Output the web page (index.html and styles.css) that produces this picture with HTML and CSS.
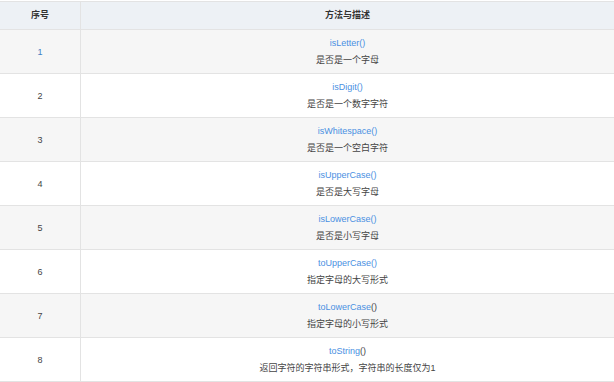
FILE: index.html
```html
<!DOCTYPE html>
<html lang="zh-CN">
<head>
<meta charset="utf-8">
<title>Character 方法</title>
<link rel="stylesheet" href="styles.css">
</head>
<body>
<div class="wrap">
<table class="ref">
  <thead>
    <tr><th class="num">序号</th><th>方法与描述</th></tr>
  </thead>
  <tbody>
    <tr><td class="num first">1</td><td><a>isLetter()</a><br>是否是一个字母</td></tr>
    <tr><td class="num">2</td><td><a>isDigit()</a><br>是否是一个数字字符</td></tr>
    <tr><td class="num">3</td><td><a>isWhitespace()</a><br>是否是一个空白字符</td></tr>
    <tr><td class="num">4</td><td><a>isUpperCase()</a><br>是否是大写字母</td></tr>
    <tr><td class="num">5</td><td><a>isLowerCase()</a><br>是否是小写字母</td></tr>
    <tr><td class="num">6</td><td><a>toUpperCase()</a><br>指定字母的大写形式</td></tr>
    <tr><td class="num">7</td><td><a>toLowerCase</a>()<br>指定字母的小写形式</td></tr>
    <tr><td class="num">8</td><td><a>toString</a>()<br>返回字符的字符串形式，字符串的长度仅为1</td></tr>
  </tbody>
</table>
</div>
</body>
</html>
```
FILE: styles.css
```css
html, body {
  margin: 0;
  padding: 0;
  background: #fff;
}
.wrap {
  padding-top: 1px;
}
.ref {
  width: 100%;
  border-collapse: collapse;
  font-family: "Liberation Sans", "Noto Sans CJK SC", sans-serif;
  font-size: 9px;
  line-height: 17px;
  color: #444;
}
.ref th, .ref td {
  border-top: 1px solid #e3e3e3;
  border-bottom: 1px solid #e3e3e3;
  text-align: center;
}
.ref th {
  background: #edf1f5;
  font-weight: bold;
  padding: 5px 8px;
  color: #333;
}
.ref td {
  padding: 5px 8px 4px;
}
.ref .num {
  width: 64px;
  border-right: 1px solid #e3e3e3;
}
.ref tbody tr:nth-child(odd) td {
  background: #f6f6f6;
}
.ref a {
  color: #4a90e2;
  text-decoration: none;
}
.ref td.first {
  color: #3f7fc4;
}
```
